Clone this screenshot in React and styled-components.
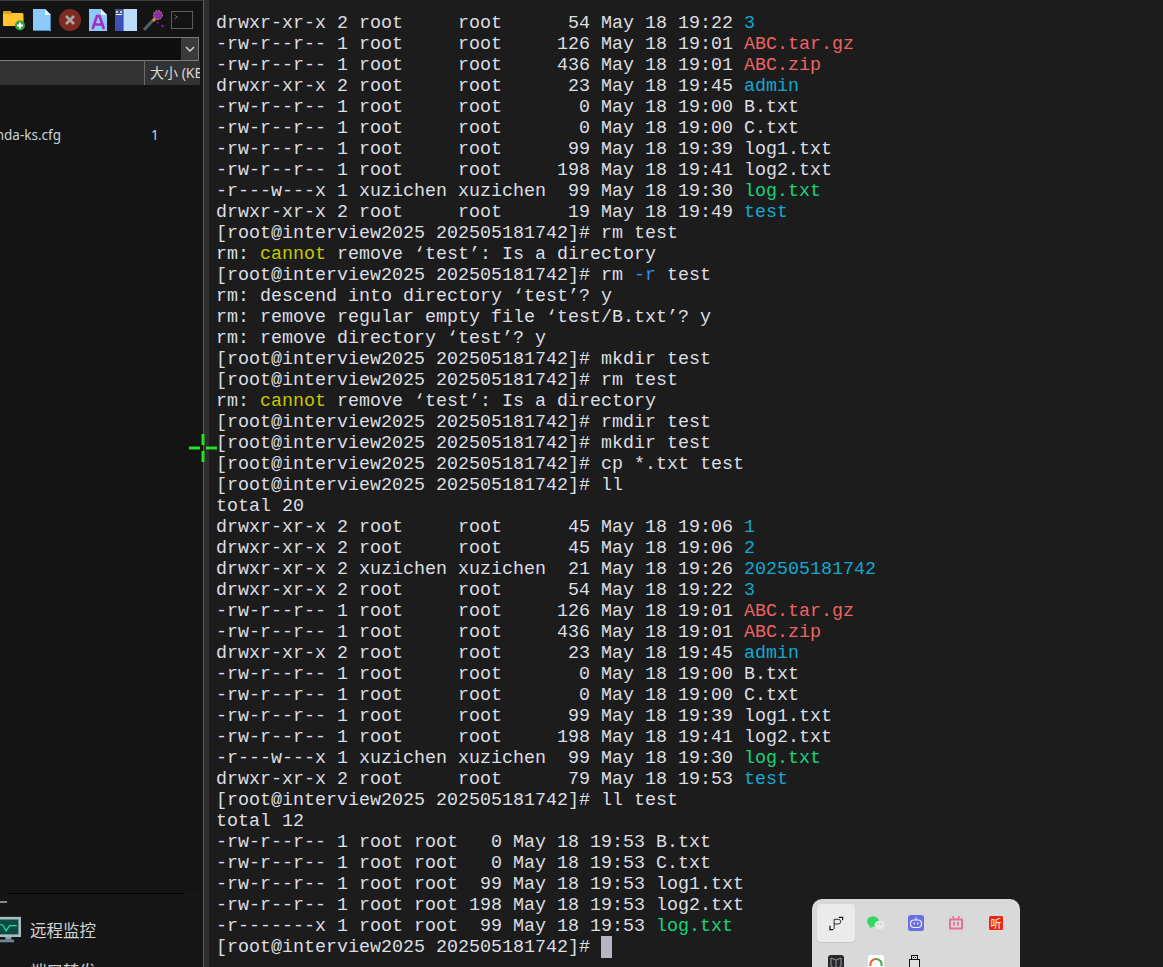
import styled, { createGlobalStyle } from "styled-components";

const GlobalStyle = createGlobalStyle`
  html, body {
    margin: 0;
    padding: 0;
    height: 100%;
    background: #1c1c1c;
    overflow: hidden;
  }
`;

const DIR = "#12a8d2";
const ARC = "#ee6262";
const EXE = "#12d67c";
const WARN = "#c4c800";
const FLAG = "#2f8fe6";

const PROMPT = "[root@interview2025 202505181742]# ";

const f = (meta, name, color) => [[meta], [name, color]];

const LINES = [
  f("drwxr-xr-x 2 root     root      54 May 18 19:22 ", "3", DIR),
  f("-rw-r--r-- 1 root     root     126 May 18 19:01 ", "ABC.tar.gz", ARC),
  f("-rw-r--r-- 1 root     root     436 May 18 19:01 ", "ABC.zip", ARC),
  f("drwxr-xr-x 2 root     root      23 May 18 19:45 ", "admin", DIR),
  f("-rw-r--r-- 1 root     root       0 May 18 19:00 ", "B.txt"),
  f("-rw-r--r-- 1 root     root       0 May 18 19:00 ", "C.txt"),
  f("-rw-r--r-- 1 root     root      99 May 18 19:39 ", "log1.txt"),
  f("-rw-r--r-- 1 root     root     198 May 18 19:41 ", "log2.txt"),
  f("-r---w---x 1 xuzichen xuzichen  99 May 18 19:30 ", "log.txt", EXE),
  f("drwxr-xr-x 2 root     root      19 May 18 19:49 ", "test", DIR),
  [[PROMPT + "rm test"]],
  [["rm: "], ["cannot", WARN], [" remove ‘test’: Is a directory"]],
  [[PROMPT + "rm "], ["-r", FLAG], [" test"]],
  [["rm: descend into directory ‘test’? y"]],
  [["rm: remove regular empty file ‘test/B.txt’? y"]],
  [["rm: remove directory ‘test’? y"]],
  [[PROMPT + "mkdir test"]],
  [[PROMPT + "rm test"]],
  [["rm: "], ["cannot", WARN], [" remove ‘test’: Is a directory"]],
  [[PROMPT + "rmdir test"]],
  [[PROMPT + "mkdir test"]],
  [[PROMPT + "cp *.txt test"]],
  [[PROMPT + "ll"]],
  [["total 20"]],
  f("drwxr-xr-x 2 root     root      45 May 18 19:06 ", "1", DIR),
  f("drwxr-xr-x 2 root     root      45 May 18 19:06 ", "2", DIR),
  f("drwxr-xr-x 2 xuzichen xuzichen  21 May 18 19:26 ", "202505181742", DIR),
  f("drwxr-xr-x 2 root     root      54 May 18 19:22 ", "3", DIR),
  f("-rw-r--r-- 1 root     root     126 May 18 19:01 ", "ABC.tar.gz", ARC),
  f("-rw-r--r-- 1 root     root     436 May 18 19:01 ", "ABC.zip", ARC),
  f("drwxr-xr-x 2 root     root      23 May 18 19:45 ", "admin", DIR),
  f("-rw-r--r-- 1 root     root       0 May 18 19:00 ", "B.txt"),
  f("-rw-r--r-- 1 root     root       0 May 18 19:00 ", "C.txt"),
  f("-rw-r--r-- 1 root     root      99 May 18 19:39 ", "log1.txt"),
  f("-rw-r--r-- 1 root     root     198 May 18 19:41 ", "log2.txt"),
  f("-r---w---x 1 xuzichen xuzichen  99 May 18 19:30 ", "log.txt", EXE),
  f("drwxr-xr-x 2 root     root      79 May 18 19:53 ", "test", DIR),
  [[PROMPT + "ll test"]],
  [["total 12"]],
  f("-rw-r--r-- 1 root root   0 May 18 19:53 ", "B.txt"),
  f("-rw-r--r-- 1 root root   0 May 18 19:53 ", "C.txt"),
  f("-rw-r--r-- 1 root root  99 May 18 19:53 ", "log1.txt"),
  f("-rw-r--r-- 1 root root 198 May 18 19:53 ", "log2.txt"),
  f("-r-------x 1 root root  99 May 18 19:53 ", "log.txt", EXE),
];

const FolderAddIcon = () => (
  <svg width="22" height="22" viewBox="0 0 22 22">
    <path d="M0 3.5Q0 2 1.5 2H7l2 2h10q1.5 0 1.5 1.5V16q0 1-1 1H1q-1 0-1-1z" fill="#ffc42e" />
    <path d="M0 5h9l1-1H8.6L7 2H1.500Q0 2 0 3.500z" fill="#e8a016" />
    <circle cx="17" cy="16.500" r="5" fill="#2f9e44" />
    <path d="M17 13.500v6M14 16.500h6" stroke="#fff" strokeWidth="2" />
  </svg>
);

const DocIcon = () => (
  <svg width="18" height="22" viewBox="0 0 18 22">
    <path d="M0 0h12l6 6v16H0z" fill="#8ec9fb" />
    <path d="M17 6v16h1V6zM0 21h18v1H0z" fill="#4a86b8" />
    <path d="M12 0l6 6h-6z" fill="#e4f2fe" />
  </svg>
);

const CloseIcon = () => (
  <svg width="22" height="22" viewBox="0 0 22 22">
    <circle cx="11" cy="11" r="11" fill="#7e2a23" />
    <path d="M7 7l8 8M15 7l-8 8" stroke="#a9a9a9" strokeWidth="2.600" />
  </svg>
);

const FontDocIcon = () => (
  <svg width="18" height="22" viewBox="0 0 18 22">
    <path d="M0 0h12l6 6v16H0z" fill="#8ec9fb" />
    <path d="M12 0l6 6h-6z" fill="#e4f2fe" />
    <path d="M3.500 20L8 7h2.500L15 20M5.500 15.500h7.500" stroke="#a42cc0" strokeWidth="2.600" fill="none" />
  </svg>
);

const BookIcon = () => (
  <svg width="22" height="22" viewBox="0 0 22 22">
    <rect width="22" height="22" fill="#bcdcf8" />
    <rect width="9" height="22" fill="#3f50b5" />
    <rect x="8" width="1" height="22" fill="#6c8ac8" />
    <path d="M1 2h2v2H1zM5 2h2v2H5z" fill="#e6e05a" />
    <rect x="1" y="5" width="6" height="1" fill="#fff" />
  </svg>
);

const WandIcon = () => (
  <svg width="22" height="22" viewBox="0 0 22 22">
    <path d="M1 21L12 9" stroke="#50606a" strokeWidth="3" />
    <path d="M10 12l3-3" stroke="#d98a2c" strokeWidth="3" />
    <circle cx="15" cy="6" r="4.500" fill="#8d2ea8" stroke="#b9a36a" strokeWidth="1" strokeDasharray="1.500 1.500" />
    <path d="M18 17l1.500-1.500L21 17l-1.500 1.500zM14 13h1.500v1.500H14z" fill="#8d1ea8" />
  </svg>
);

const TermIcon = () => (
  <svg width="22" height="18" viewBox="0 0 22 18">
    <rect x=".5" y=".5" width="21" height="17" fill="#141414" stroke="#5c5c5c" />
    <path d="M3.500 4l3 2-3 2" fill="none" stroke="#6a6a6a" />
  </svg>
);

const MonitorIcon = () => (
  <svg width="24" height="30" viewBox="0 0 24 30">
    <rect width="24" height="23" fill="#a9bcc2" />
    <rect x="0" y="3" width="21" height="17" fill="#0d4a40" />
    <path d="M0 9h3l4 7 4-6h8" fill="none" stroke="#22e0b0" strokeWidth="1.400" />
    <rect x="6" y="23" width="7" height="3" fill="#8da0a8" />
    <rect x="0" y="26" width="16" height="3" fill="#6c8796" />
  </svg>
);

const LaunchIcon = () => (
  <svg width="15" height="15" viewBox="0 0 16 16">
    <path d="M5.500 14V3.500H10a2.500 2.500 0 0 1 0 5H5.500" fill="none" stroke="#222" strokeWidth="1" />
    <path d="M10.500 1.500h4v3M1 10.500v4h3.500" fill="none" stroke="#111" strokeWidth="1.300" />
  </svg>
);

const WechatIcon = () => (
  <svg width="18" height="14" viewBox="0 0 18 14">
    <ellipse cx="6" cy="5.500" rx="6" ry="5.200" fill="#30d860" />
    <path d="M3 9l-.5 3.500L6 10z" fill="#30d860" />
    <ellipse cx="12.500" cy="9" rx="5" ry="4.200" fill="#e9e9e9" />
    <path d="M10.500 8h1M13.500 8h1" stroke="#999" strokeWidth="1" />
  </svg>
);

const RobotIcon = () => (
  <svg width="16" height="16" viewBox="0 0 16 16">
    <rect width="16" height="16" rx="2.500" fill="#6a70e0" />
    <rect x="2.500" y="5" width="11" height="7.500" rx="3.500" fill="none" stroke="#eef" strokeWidth="1.200" />
    <path d="M8 2.500V5" stroke="#eef" strokeWidth="1.200" />
    <path d="M5.500 8.500h1.500M9 8.500h1.500" stroke="#eef" strokeWidth="1.400" />
  </svg>
);

const TvIcon = () => (
  <svg width="14" height="14" viewBox="0 0 14 14">
    <path d="M3.500 0l1.500 3M10.500 0L9 3" stroke="#e8709a" strokeWidth="1.600" />
    <rect x="1" y="3.500" width="12" height="9" fill="none" stroke="#e8709a" strokeWidth="2" />
    <rect x="4" y="6" width="2" height="3.500" fill="#e8709a" />
    <rect x="8" y="6" width="2" height="3.500" fill="#e8709a" />
  </svg>
);

const ListenIcon = () => (
  <svg width="14" height="14" viewBox="0 0 14 14">
    <rect width="14" height="14" rx="1.500" fill="#f0270c" />
    <text x="7" y="11.500" textAnchor="middle" fontSize="11" fontFamily="'Noto Sans CJK SC', sans-serif" fill="#fff">听</text>
  </svg>
);

const CubeIcon = () => (
  <svg width="16" height="16" viewBox="0 0 16 16">
    <rect width="16" height="16" rx="3" fill="#26282c" />
    <path d="M3 3l5 2 5-2v8l-5 3-5-3zM8 5v9" fill="none" stroke="#9a9a9a" strokeWidth="1" />
  </svg>
);

const RingIcon = () => (
  <svg width="16" height="16" viewBox="0 0 16 16">
    <rect width="16" height="16" rx="3" fill="#fff" />
    <path d="M2.500 11A5.500 5.500 0 0 1 8 4" fill="none" stroke="#e8622c" strokeWidth="2.200" />
    <path d="M8 4a5.500 5.500 0 0 1 5.500 7" fill="none" stroke="#4aa84a" strokeWidth="2.200" />
  </svg>
);

const UsbIcon = () => (
  <svg width="14" height="16" viewBox="0 0 14 16">
    <rect x="2.500" y=".5" width="6" height="4" fill="none" stroke="#111" />
    <rect x=".5" y="4.500" width="10" height="11" fill="#e0e0e0" stroke="#111" />
    <rect x="4" y="2" width="1" height="1" fill="#111" />
    <rect x="6" y="2" width="1" height="1" fill="#111" />
  </svg>
);

const App = () => {
  return (
    <Screen>
      <GlobalStyle />
      <Sidebar>
        <Toolbar>
          <ToolIcon><FolderAddIcon /></ToolIcon>
          <ToolIcon><DocIcon /></ToolIcon>
          <ToolIcon><CloseIcon /></ToolIcon>
          <ToolIcon><FontDocIcon /></ToolIcon>
          <ToolIcon><BookIcon /></ToolIcon>
          <ToolIcon><WandIcon /></ToolIcon>
          <ToolIcon><TermIcon /></ToolIcon>
        </Toolbar>
        <PathBox>
          <PathInput />
          <PathArrow>
            <svg width="10" height="6" viewBox="0 0 10 6">
              <path d="M1 1l4 4 4-4" fill="none" stroke="#d0d0d0" strokeWidth="1.500" />
            </svg>
          </PathArrow>
        </PathBox>
        <ListHeader>
          <NameColumn />
          <SizeColumn>大小 (KB)</SizeColumn>
        </ListHeader>
        <FileList>
          <FileRow>
            <FileName><span>anaconda-ks.cfg</span></FileName>
            <FileSize>1</FileSize>
          </FileRow>
        </FileList>
        <BottomNav>
          <NavRule />
          <NavDash />
          <NavRow>
            <MonitorSlot><MonitorIcon /></MonitorSlot>
            <NavLabel>远程监控</NavLabel>
          </NavRow>
          <NavRow>
            <MonitorSlot />
            <NavLabel>端口转发</NavLabel>
          </NavRow>
        </BottomNav>
      </Sidebar>
      <Splitter />
      <Terminal>
        {LINES.map((line, i) => (
          <Line key={i}>
            {line.map(([text, color], j) => (
              <Seg key={j} $color={color}>{text}</Seg>
            ))}
          </Line>
        ))}
        <Line>
          {PROMPT}
          <Cursor />
        </Line>
      </Terminal>
      <Crosshair>
        <svg width="28" height="28" viewBox="0 0 28 28">
          <path d="M0 14h11M17 14h11M14 0v11M14 17v11" stroke="#22e022" strokeWidth="3" />
        </svg>
      </Crosshair>
      <Tray>
        <TrayCell $active><LaunchIcon /></TrayCell>
        <TrayCell><WechatIcon /></TrayCell>
        <TrayCell><RobotIcon /></TrayCell>
        <TrayCell><TvIcon /></TrayCell>
        <TrayCell><ListenIcon /></TrayCell>
        <TrayCell><CubeIcon /></TrayCell>
        <TrayCell><RingIcon /></TrayCell>
        <TrayCell><UsbIcon /></TrayCell>
      </Tray>
    </Screen>
  );
};

const Screen = styled.div`
  position: relative;
  display: flex;
  height: 100vh;
  overflow: hidden;
  background: #1c1c1c;
`;

const Sidebar = styled.aside`
  display: flex;
  flex-direction: column;
  flex: 0 0 203px;
  width: 203px;
  overflow: hidden;
  background: #141414;
  border-top: 1px solid #3c3c3c;
  box-sizing: border-box;
  font-family: "Noto Sans", "Noto Sans CJK SC", sans-serif;
`;

const Toolbar = styled.div`
  display: flex;
  align-items: center;
  gap: 6px;
  height: 22px;
  padding: 8px 0 6px 3px;
`;

const ToolIcon = styled.div`
  display: flex;
  align-items: center;
  justify-content: center;
  width: 22px;
  height: 22px;
  flex: none;
`;

const PathBox = styled.div`
  display: flex;
  box-sizing: border-box;
  width: 199px;
  height: 24px;
  border: 1px solid #7c7c7c;
  border-left: none;
  background: #0f0f0f;
`;

const PathInput = styled.div`
  flex: 1;
`;

const PathArrow = styled.div`
  display: flex;
  align-items: center;
  justify-content: center;
  width: 17px;
  background: #3a3a3a;
`;

const ListHeader = styled.div`
  display: flex;
  width: 200px;
  height: 24px;
  flex: none;
  background: #333333;
  color: #d8d8d8;
`;

const NameColumn = styled.div`
  width: 144px;
  flex: none;
`;

const SizeColumn = styled.div`
  flex: 1;
  overflow: hidden;
  white-space: nowrap;
  box-sizing: border-box;
  padding-left: 5px;
  border-left: 1px solid #6c6c6c;
  font-size: 14px;
  line-height: 24px;
`;

const FileList = styled.div`
  flex: 1;
  padding-top: 40px;
`;

const FileRow = styled.div`
  display: flex;
  height: 20px;
  align-items: center;
  color: #c8d4dc;
  font-size: 13.500px;
`;

const FileName = styled.div`
  display: flex;
  justify-content: flex-end;
  width: 61px;
  overflow: hidden;
  white-space: nowrap;
  flex: none;
`;

const FileSize = styled.div`
  margin-left: 90px;
`;

const BottomNav = styled.div`
  position: relative;
  flex: none;
  height: 74px;
  overflow: hidden;
  background: #161616;
`;

const NavRule = styled.div`
  height: 1px;
  margin: 0 20px 0 7px;
  background: #000000;
`;

const NavDash = styled.div`
  width: 7px;
  height: 2px;
  margin-top: 7px;
  background: #8a8a8a;
`;

const NavRow = styled.div`
  display: flex;
  align-items: center;
  gap: 9px;
  height: 32px;
  margin-top: 11px;
  &:last-child {
    margin-top: 9px;
  }
`;

const MonitorSlot = styled.div`
  display: flex;
  justify-content: flex-end;
  width: 21px;
  height: 30px;
  overflow: hidden;
  flex: none;
`;

const NavLabel = styled.div`
  color: #d4d4d4;
  font-size: 16.500px;
  white-space: nowrap;
`;

const Splitter = styled.div`
  flex: 0 0 5px;
  border-left: 1px solid #5c5c5c;
  background: #2e2e2e;
`;

const Terminal = styled.main`
  flex: 1;
  min-width: 0;
  padding: 13px 0 0 7px;
  background: #1c1c1c;
  color: #dcdfe3;
  font-family: "Liberation Mono", monospace;
  font-size: 18.340px;
  line-height: 21px;
  white-space: pre;
  overflow: hidden;
`;

const Line = styled.div`
  height: 21px;
`;

const Seg = styled.span`
  color: ${(props) => props.$color || "inherit"};
`;

const Cursor = styled.span`
  display: inline-block;
  width: 11px;
  height: 22px;
  margin-top: -1px;
  vertical-align: top;
  background: #b5b5c3;
`;

const Crosshair = styled.div`
  position: absolute;
  left: 189px;
  top: 434px;
  width: 28px;
  height: 28px;
  line-height: 0;
`;

const Tray = styled.div`
  position: absolute;
  right: 143px;
  bottom: 0;
  display: grid;
  grid-template-columns: repeat(5, 38px);
  grid-auto-rows: 38px;
  gap: 2px;
  box-sizing: border-box;
  width: 208px;
  height: 68px;
  padding: 5px 0 0 5px;
  overflow: hidden;
  border-radius: 10px 10px 0 0;
  background: #d8d9d8;
`;

const TrayCell = styled.div`
  display: flex;
  align-items: center;
  justify-content: center;
  border-radius: 4px;
  background: ${(props) => (props.$active ? "#ebebeb" : "transparent")};
  box-shadow: ${(props) => (props.$active ? "0 1px 1px rgba(0, 0, 0, 0.1)" : "none")};
`;

export default App;
